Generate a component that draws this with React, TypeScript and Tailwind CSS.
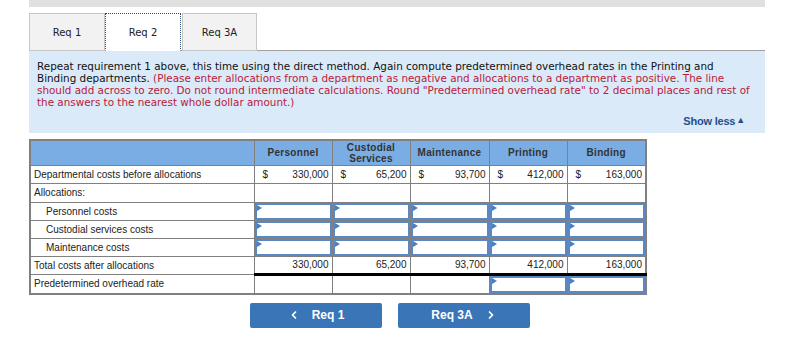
import { ChevronLeft, ChevronRight } from 'lucide-react';

const cols = ['Personnel', 'Custodial Services', 'Maintenance', 'Printing', 'Binding'];
const before = ['330,000', '65,200', '93,700', '412,000', '163,000'];

function Flag() {
  return (
    <span className="absolute left-0 top-0 w-0 h-0 border-t-[3px] border-b-[3px] border-l-[5px] border-t-transparent border-b-transparent border-l-[#4a7fc1]" />
  );
}

function InputCell() {
  return (
    <td className="p-0 border border-[#808080]">
      <div className="relative w-full h-[17px] border-2 border-[#5b88c2] bg-white">
        <Flag />
      </div>
    </td>
  );
}

export default function App() {
  const allocs = ['Personnel costs', 'Custodial services costs', 'Maintenance costs'];

  return (
    <div className="w-[804px] h-[337px] bg-white relative" style={{ fontFamily: '"DejaVu Sans", Verdana, sans-serif' }}>
      <div className="ml-[29px] w-[736px] h-[7px] bg-[#e0e0e0]" />

      {/* tabs */}
      <div className="ml-[29px] w-[736px] mt-[6px] flex items-end border-b border-[#a0a0a0] h-[38px]">
        <div className="w-[76px] h-[38px] -mb-px bg-[#f2f2f2] border border-[#c6c6c6] flex items-center justify-center text-[10px] text-[#222]">Req 1</div>
        <div className="w-[76px] h-[38px] -mb-px bg-white border border-dotted border-[#2a4d7a] border-b-white flex items-center justify-center text-[10px] text-[#222]">Req 2</div>
        <div className="w-[75px] h-[38px] -mb-px ml-px bg-[#f2f2f2] border border-[#c6c6c6] flex items-center justify-center text-[10px] text-[#222]">Req 3A</div>
      </div>

      {/* instructions */}
      <div className="ml-[29px] w-[736px] h-[82px] bg-[#dbeaf8] pl-[8px] pt-[9px] relative">
        <p className="text-[10.4px] leading-[12px] text-[#111] whitespace-nowrap">
          Repeat requirement 1 above, this time using the direct method. Again compute predetermined overhead rates in the Printing and<br />
          Binding departments.{' '}
          <span className="text-[#b8203a]">
            (Please enter allocations from a department as negative and allocations to a department as positive. The line<br />
            should add across to zero. Do not round intermediate calculations. Round "Predetermined overhead rate" to 2 decimal places and rest of<br />
            the answers to the nearest whole dollar amount.)
          </span>
        </p>
        <div className="absolute right-[20px] bottom-[4px] flex items-center text-[11px] font-bold text-[#24508a] tracking-[-0.2px]" style={{ fontFamily: '"Liberation Sans", Arial, sans-serif' }}>
          Show less<span className="text-[9px] ml-px">▲</span>
        </div>
      </div>

      {/* table */}
      <div className="ml-[29px] mt-[6px]" style={{ fontFamily: '"Liberation Sans", Arial, sans-serif' }}>
        <table className="border-collapse border-2 border-[#808080] text-[10px] text-[#222] table-fixed">
          <colgroup>
            <col className="w-[224px]" />
            <col className="w-[78px]" />
            <col className="w-[78px]" />
            <col className="w-[79px]" />
            <col className="w-[78px]" />
            <col className="w-[79px]" />
          </colgroup>
          <thead>
            <tr className="bg-[#79ade3] h-[25px]">
              <th className="border border-[#808080]" />
              {cols.map((c) => (
                <th key={c} className="border border-[#808080] font-bold text-[#333] text-[10px] leading-[11px] px-1 tracking-[0.3px]">
                  {c === 'Custodial Services' ? (<>Custodial<br />Services</>) : c}
                </th>
              ))}
            </tr>
          </thead>
          <tbody>
            <tr className="h-[18px]">
              <td className="border border-[#808080] pl-[3px] py-0">Departmental costs before allocations</td>
              {before.map((v) => (
                <td key={v} className="border border-[#808080] px-[3px] py-0">
                  <div className="flex justify-between pl-[5px]"><span>$</span><span>{v}</span></div>
                </td>
              ))}
            </tr>
            <tr className="h-[19px]">
              <td className="border border-[#808080] pl-[3px] py-0">Allocations:</td>
              {cols.map((c) => <td key={c} className="border border-[#808080]" />)}
            </tr>
            {allocs.map((a) => (
              <tr key={a} className="h-[18px]">
                <td className="border border-[#808080] pl-[15px] py-0">{a}</td>
                {cols.map((c) => <InputCell key={c} />)}
              </tr>
            ))}
            <tr className="h-[18px]">
              <td className="border border-[#808080] pl-[3px] py-0">Total costs after allocations</td>
              {before.map((v) => (
                <td key={v} className="border border-[#808080] border-t-[#222] border-b-[3px] border-b-black px-[3px] py-0 text-right">{v}</td>
              ))}
            </tr>
            <tr className="h-[18px]">
              <td className="border border-[#808080] pl-[3px] py-0">Predetermined overhead rate</td>
              <td className="border border-[#808080]" />
              <td className="border border-[#808080]" />
              <td className="border border-[#808080]" />
              <InputCell />
              <InputCell />
            </tr>
          </tbody>
        </table>
      </div>

      {/* nav buttons */}
      <div className="flex gap-[16px] ml-[250px] mt-[8px]" style={{ fontFamily: '"Liberation Sans", Arial, sans-serif' }}>
        <button className="w-[132px] h-[25px] bg-[#3a75b8] rounded-[2px] text-white text-[12px] font-bold flex items-center justify-center gap-[12px]">
          <ChevronLeft size={12} strokeWidth={3.5} />
          Req 1
        </button>
        <button className="w-[132px] h-[25px] bg-[#3a75b8] rounded-[2px] text-white text-[12px] font-bold flex items-center justify-center gap-[12px]">
          Req 3A
          <ChevronRight size={12} strokeWidth={3.5} />
        </button>
      </div>
    </div>
  );
}
